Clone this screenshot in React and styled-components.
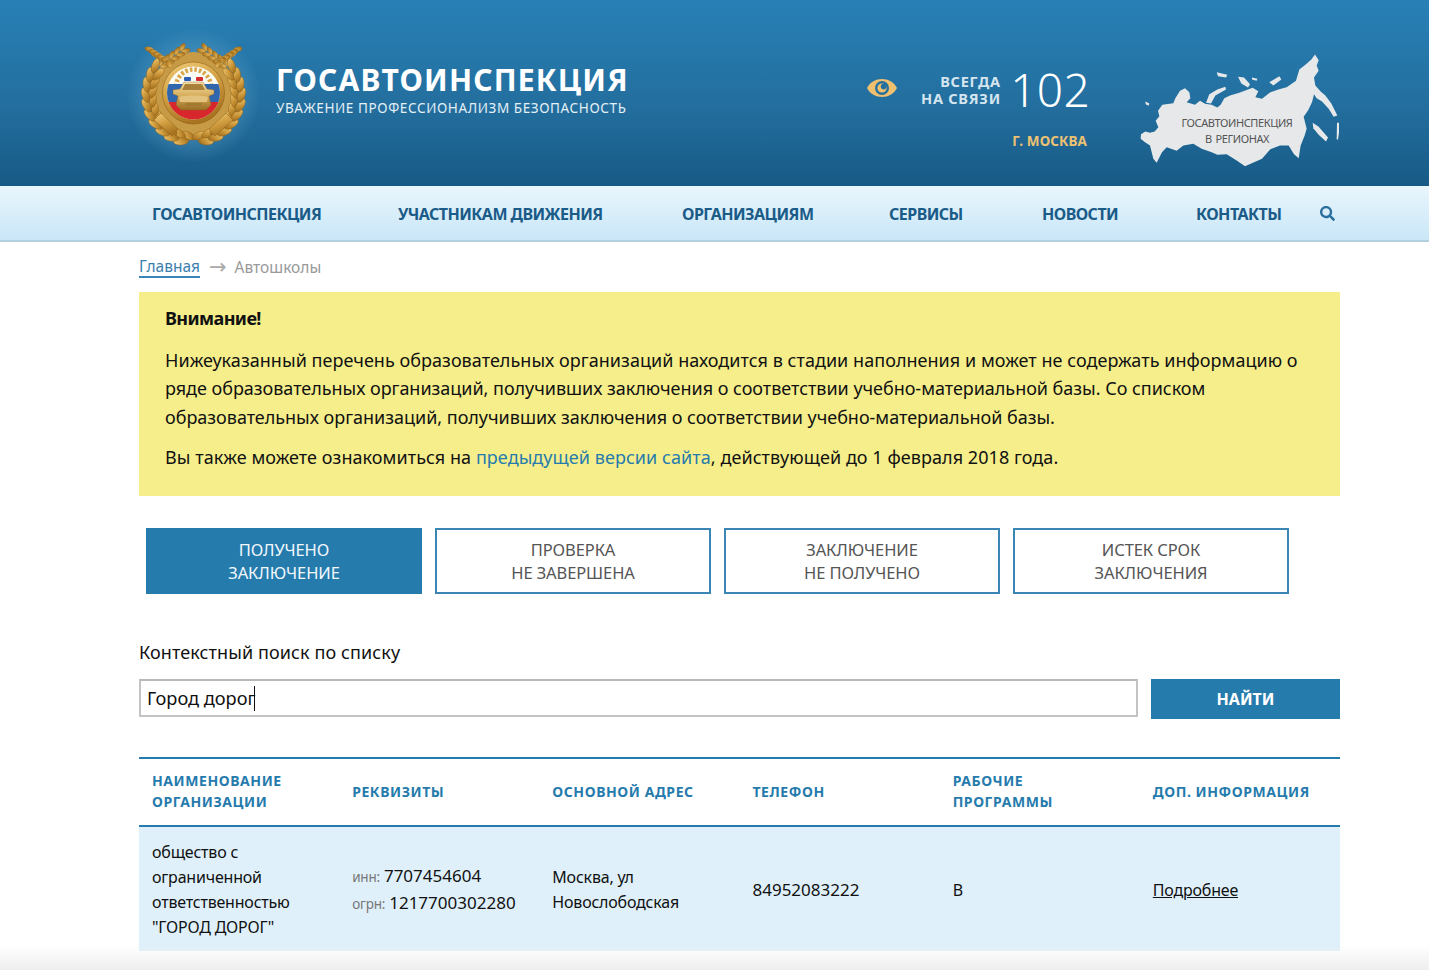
import React from 'react';
import styled, { createGlobalStyle } from 'styled-components';
import { FaSearch } from 'react-icons/fa';

const FONT = '"Noto Sans", "Open Sans", sans-serif';
const BLUE = '#267bad';

const GlobalStyle = createGlobalStyle`
  html, body {
    margin: 0;
    padding: 0;
    background: #fff;
    font-family: ${FONT};
    color: #111;
  }
`;

const Page = styled.div`
  position: relative;
  height: 970px;
  overflow: hidden;
`;

const Header = styled.header`
  height: 186px;
  background: linear-gradient(180deg, #2880b6 0%, #236f9f 55%, #185a86 100%);
`;

const HeaderInner = styled.div`
  width: 1201px;
  margin-left: 139px;
  display: flex;
  align-items: flex-start;
`;

const EmblemSvg = styled.svg`
  width: 112px;
  height: 120px;
  margin-top: 35px;
  overflow: visible;
  filter: blur(0.3px);
`;

const Brand = styled.div`
  margin: 61px 0 0 25px;
  color: #fff;
`;

const BrandTitle = styled.div`
  font-size: 30px;
  line-height: 38px;
  font-weight: 700;
  letter-spacing: 1.2px;
  white-space: nowrap;
`;

const BrandTag = styled.div`
  font-size: 13.5px;
  line-height: 18px;
  letter-spacing: 0.6px;
  color: #e4f0f7;
  white-space: nowrap;
`;

const HeaderRight = styled.div`
  margin-left: auto;
  display: flex;
  align-items: flex-start;
`;

const EyeSvg = styled.svg`
  width: 30px;
  height: 20px;
  margin-top: 78px;
`;

const Contact = styled.div`
  margin: 66px 0 0 24px;
  width: 167px;
`;

const ContactRow = styled.div`
  display: flex;
  justify-content: space-between;
  align-items: center;
`;

const Always = styled.div`
  font-size: 14.5px;
  line-height: 17px;
  font-weight: 700;
  letter-spacing: 0.75px;
  color: #d5e5ef;
  text-align: right;
  white-space: nowrap;
`;

const Phone = styled.div`
  margin: -2px -2px 0 0;
  font-size: 46px;
  line-height: 50px;
  font-weight: 300;
  letter-spacing: 0.3px;
  color: #fff;
`;

const City = styled.div`
  margin-top: 18px;
  padding-right: 1px;
  font-size: 13.5px;
  line-height: 18px;
  font-weight: 700;
  letter-spacing: 0.1px;
  color: #ecc272;
  text-align: right;
`;

const MapBox = styled.div`
  position: relative;
  width: 200px;
  height: 117px;
  margin: 52px 0 0 52px;
`;

const MapSvg = styled.svg`
  display: block;
  filter: blur(0.35px);
`;

const MapLabel = styled.div`
  position: absolute;
  left: 0;
  right: 6px;
  top: 63px;
  font-size: 11px;
  line-height: 16px;
  letter-spacing: -0.4px;
  word-spacing: 1.5px;
  color: #555;
  text-align: center;
`;

const Nav = styled.nav`
  height: 54px;
  background: linear-gradient(180deg, #e9f5fc 0%, #c9e7f8 100%);
  border-bottom: 2px solid #b4cfe0;
`;

const NavList = styled.div`
  margin-left: 152px;
  height: 54px;
  padding-top: 1px;
  box-sizing: border-box;
  display: grid;
  grid-template-columns: 246px 284px 207px 153px 154px 124px auto;
  align-items: center;
`;

const NavLink = styled.a`
  font-size: 16px;
  font-weight: 700;
  letter-spacing: -0.54px;
  color: #1a5b88;
  white-space: nowrap;
`;

const SearchIcon = styled(FaSearch)`
  display: block;
  width: 15px;
  height: 15px;
  color: #2b6f9f;
`;

const Main = styled.main`
  width: 1201px;
  margin-left: 139px;
`;

const Crumbs = styled.div`
  height: 50px;
  display: flex;
  align-items: center;
  font-size: 15.5px;
  color: #999;
`;

const CrumbLink = styled.a`
  color: #3a7eae;
  line-height: 20px;
  border-bottom: 2px solid #3a86b8;
`;

const CrumbArrow = styled.span`
  margin: 0 8px 0 9px;
  color: #aaa;
  font-family: "DejaVu Sans", sans-serif;
  font-size: 21px;
  line-height: 20px;
`;

const Notice = styled.section`
  height: 204px;
  box-sizing: border-box;
  padding: 12px 26px 0;
  background: #f5ee8b;
  font-size: 18px;
  line-height: 28.5px;
  color: #111;
`;

const NoticeTitle = styled.div`
  font-weight: 700;
  letter-spacing: -0.6px;
  margin-bottom: 13px;
`;

const NoticeText = styled.p`
  margin: 0 0 12px;
  white-space: nowrap;
`;

const NoticeLine = styled.span`
  display: block;
  letter-spacing: ${p => p.$spacing}px;
`;

const NoticeLink = styled.a`
  color: #267bad;
`;

const Tabs = styled.div`
  display: flex;
  gap: 13px;
  margin: 32px 0 0 7px;
`;

const Tab = styled.button`
  width: 276px;
  height: 66px;
  padding: 0;
  box-sizing: border-box;
  border: 2px solid ${p => (p.$active ? BLUE : '#3c86b6')};
  background: ${p => (p.$active ? BLUE : '#fff')};
  color: ${p => (p.$active ? '#f2f8fc' : '#555')};
  font-family: ${FONT};
  font-size: 16.5px;
  line-height: 23px;
  letter-spacing: -0.1px;
  text-align: center;
`;

const SearchLabel = styled.div`
  margin-top: 44px;
  font-size: 18px;
  line-height: 28px;
  letter-spacing: 0.1px;
`;

const SearchRow = styled.div`
  display: flex;
  justify-content: space-between;
  align-items: flex-start;
  margin-top: 13px;
`;

const SearchField = styled.div`
  width: 999px;
  height: 38px;
  box-sizing: border-box;
  padding: 0 0 1px 6px;
  border: 2px solid #c4c4c4;
  border-top-color: #b8b8b8;
  display: flex;
  align-items: center;
  font-size: 18.2px;
  color: #111;

  &::after {
    content: '';
    width: 1px;
    height: 25px;
    margin: 1px 0 0 -1px;
    background: #111;
  }
`;

const FindButton = styled.button`
  width: 189px;
  height: 40px;
  padding: 0;
  border: 0;
  background: ${BLUE};
  color: #fff;
  font-family: ${FONT};
  font-size: 16px;
  font-weight: 700;
`;

const Table = styled.table`
  width: 100%;
  margin-top: 38px;
  border-collapse: collapse;
  table-layout: fixed;
`;

const Th = styled.th`
  height: 68px;
  padding: 0 0 2px 13px;
  border-top: 2px solid ${BLUE};
  border-bottom: 2px solid ${BLUE};
  box-sizing: border-box;
  font-size: 14px;
  line-height: 21px;
  font-weight: 700;
  letter-spacing: 0.57px;
  color: ${BLUE};
  text-align: left;
  white-space: nowrap;
`;

const Row = styled.tr`
  background: #dff0fa;
`;

const Td = styled.td`
  height: 125px;
  padding: 2px 0 0 13px;
  box-sizing: border-box;
  font-size: 16px;
  line-height: 25px;
  letter-spacing: -0.2px;
  color: #111;
  white-space: nowrap;
`;

const Digits = styled.span`
  font-size: 17px;
  letter-spacing: 0;
`;

const Req = styled.span`
  font-size: 13.5px;
  color: #777;
`;

const MoreLink = styled.a`
  color: #111;
  text-decoration: underline;
`;

const BottomFade = styled.div`
  position: absolute;
  left: 0;
  right: 0;
  bottom: 0;
  height: 25px;
  background: linear-gradient(180deg, rgba(238, 238, 238, 0) 0%, #eeeeee 100%);
  pointer-events: none;
`;

// two rows of laurel leaves running up both sides of the badge
const wreathLeaves = [];
[-1, 1].forEach(side => {
  [
    { radius: 41, tilt: -14, offset: 0 },
    { radius: 48, tilt: 20, offset: 7 },
  ].forEach(({ radius, tilt, offset }) => {
    for (let i = 0; i < 10; i += 1) {
      const deg = 172 - i * 12.5 - offset;
      const rad = (deg * Math.PI) / 180;
      wreathLeaves.push({
        x: 63.5 + side * radius * Math.sin(rad),
        y: 60 - radius * Math.cos(rad),
        angle: side * (deg - 90 + tilt),
      });
    }
  });
});

// wheat ears on top of the wreath, [from, to] in the left half
const earLines = [
  [[54, 14], [33, 29]],
  [[21, 16], [37, 27]],
];
const wheat = [];
[-1, 1].forEach(side => {
  earLines.forEach(([[x1, y1], [x2, y2]]) => {
    const base = (Math.atan2(x2 - x1, y1 - y2) * 180) / Math.PI;
    for (let i = 0; i < 5; i += 1) {
      const x = x1 + ((x2 - x1) * i) / 4;
      const y = y1 + ((y2 - y1) * i) / 4;
      [-1.8, 1.8].forEach(shift => {
        const gx = x + shift;
        wheat.push({
          x: side === 1 ? 127 - gx : gx,
          y: y + shift,
          angle: side * -(base + shift * 12),
        });
      });
    }
  });
});

const Emblem = () => (
  <EmblemSvg viewBox="9 0 112 120" role="img" aria-label="Эмблема Госавтоинспекции">
    <defs>
      <radialGradient id="halo">
        <stop offset="0.6" stopColor="#6fb3d8" stopOpacity="0.35" />
        <stop offset="1" stopColor="#6fb3d8" stopOpacity="0" />
      </radialGradient>
      <linearGradient id="gold" x1="0" y1="0" x2="0.4" y2="1">
        <stop offset="0" stopColor="#f1cd79" />
        <stop offset="0.55" stopColor="#d09c3f" />
        <stop offset="1" stopColor="#a8741f" />
      </linearGradient>
      <linearGradient id="carGold" x1="0" y1="0" x2="0" y2="1">
        <stop offset="0" stopColor="#f5e2ac" />
        <stop offset="0.5" stopColor="#d6aa58" />
        <stop offset="1" stopColor="#9a6e24" />
      </linearGradient>
      <clipPath id="disc">
        <circle cx="63.5" cy="58" r="26.5" />
      </clipPath>
    </defs>
    <circle cx="63.5" cy="60" r="68" fill="url(#halo)" />
    <circle cx="63.5" cy="61" r="44" fill="#c79a45" />
    {wheat.map((grain, i) => (
      <ellipse
        key={`w${i}`}
        cx={grain.x}
        cy={grain.y}
        rx="2.2"
        ry="4.4"
        fill="url(#gold)"
        stroke="#8d6019"
        strokeWidth="0.4"
        transform={`rotate(${grain.angle} ${grain.x} ${grain.y})`}
      />
    ))}
    {wreathLeaves.map((leaf, i) => (
      <ellipse
        key={i}
        cx={leaf.x}
        cy={leaf.y}
        rx="3.6"
        ry="7.6"
        fill="url(#gold)"
        stroke="#8d6019"
        strokeWidth="0.45"
        transform={`rotate(${leaf.angle} ${leaf.x} ${leaf.y})`}
      />
    ))}
    <g fill="url(#gold)" stroke="#8d6019" strokeWidth="0.5">
      <path d="M31 78 L48 94 L42 101 L24 85Z" />
      <path d="M96 78 L79 94 L85 101 L103 85Z" />
    </g>
    <circle cx="63.5" cy="58" r="31" fill="url(#gold)" stroke="#8d6019" strokeWidth="0.6" />
    <circle cx="63.5" cy="58" r="26.5" fill="#fbfbf5" />
    <g clipPath="url(#disc)">
      <circle cx="63.5" cy="52" r="17.5" fill="none" stroke="#d9a648" strokeWidth="4.5" strokeDasharray="2.6 2" />
      <rect x="36" y="49" width="56" height="18" fill="#2f66ad" />
      <rect x="36" y="67" width="56" height="18" fill="#d8262d" />
    </g>
    <rect x="54" y="42" width="7" height="4" rx="1" fill="#2f5fb0" />
    <rect x="66" y="42" width="7" height="4" rx="1" fill="#d42a30" />
    <path
      d="M54 47 L73 47 L77 54 L84 55 L84 59 L79 61 L81 70 L76 75 L51 75 L46 70 L48 61 L43 59 L43 55 L50 54Z"
      fill="url(#carGold)"
      stroke="#8a6320"
      strokeWidth="0.4"
    />
    <path d="M55 49 L72 49 L75 55 L52 55Z" fill="#a8803a" />
    <path d="M49 62 C55 60 72 60 78 62 L77 67 L50 67Z" fill="#e3c27e" />
    <rect x="55" y="68" width="17" height="3" rx="1" fill="#a47a30" />
  </EmblemSvg>
);

const Eye = () => (
  <EyeSvg viewBox="0 0 30 20" aria-hidden="true">
    <path d="M0 10 C6 -2 24 -2 30 10 C24 22 6 22 0 10Z" fill="#efc070" />
    <circle cx="15" cy="10" r="7" fill="#236f9f" />
    <circle cx="15" cy="10" r="4.6" fill="#efc070" />
    <circle cx="16.6" cy="8.6" r="2.8" fill="#236f9f" />
  </EyeSvg>
);

const RussiaMap = () => (
  <MapSvg viewBox="30 20 600 350" width="200" height="117" aria-hidden="true">
    <g fill="#e6e8ea">
      <path d="M33 266 L46 258 L60 262 L74 258 L85 245 L77 226 L88 212 L84 196 L97 178 L130 173 L136 158 L150 136 L165 128 L178 140 L181 158 L170 170 L195 178 L210 166 L225 175 L245 178 L262 186 L272 178 L283 158 L300 150 L330 141 L368 127 L385 137 L376 155 L396 160 L420 141 L445 132 L470 125 L498 106 L508 72 L528 56 L544 42 L555 27 L566 44 L560 60 L566 76 L552 96 L556 120 L572 138 L586 150 L604 174 L622 210 L611 214 L596 190 L576 168 L560 158 L552 146 L546 170 L534 195 L521 214 L530 250 L524 270 L512 300 L506 338 L492 326 L476 300 L450 300 L421 311 L396 340 L345 362 L320 345 L290 326 L262 328 L245 320 L215 310 L190 295 L160 300 L140 316 L110 305 L96 320 L80 352 L70 340 L60 300 L45 290 L32 280Z" />
      <path d="M228 172 L238 146 L262 132 L286 124 L288 132 L256 150 L243 174Z" />
      <path d="M324 94 L342 96 L360 116 L354 126 L334 114Z" />
      <path d="M418 110 L448 92 L454 102 L430 120Z" />
      <path d="M260 80 L292 88 L288 96 L264 92Z" />
      <path d="M548 232 L566 244 L594 276 L588 288 L566 268 L550 248Z" />
      <path d="M46 168 L58 174 L56 181 L47 176Z" />
      <path d="M621 232 L627 232 L627 262 L624 282 L620 282Z" />
      <path d="M366 96 L382 100 L380 106 L366 102Z" />
    </g>
  </MapSvg>
);

const navItems = ['ГОСАВТОИНСПЕКЦИЯ', 'УЧАСТНИКАМ ДВИЖЕНИЯ', 'ОРГАНИЗАЦИЯМ', 'СЕРВИСЫ', 'НОВОСТИ', 'КОНТАКТЫ'];

const tabs = [
  { first: 'ПОЛУЧЕНО', second: 'ЗАКЛЮЧЕНИЕ', active: true },
  { first: 'ПРОВЕРКА', second: 'НЕ ЗАВЕРШЕНА' },
  { first: 'ЗАКЛЮЧЕНИЕ', second: 'НЕ ПОЛУЧЕНО' },
  { first: 'ИСТЕК СРОК', second: 'ЗАКЛЮЧЕНИЯ' },
];

const App = () => (
  <Page>
    <GlobalStyle />
    <Header>
      <HeaderInner>
        <Emblem />
        <Brand>
          <BrandTitle>ГОСАВТОИНСПЕКЦИЯ</BrandTitle>
          <BrandTag>УВАЖЕНИЕ ПРОФЕССИОНАЛИЗМ БЕЗОПАСНОСТЬ</BrandTag>
        </Brand>
        <HeaderRight>
          <Eye />
          <Contact>
            <ContactRow>
              <Always>
                ВСЕГДА
                <br />
                НА СВЯЗИ
              </Always>
              <Phone>102</Phone>
            </ContactRow>
            <City>Г. МОСКВА</City>
          </Contact>
          <MapBox>
            <RussiaMap />
            <MapLabel>
              ГОСАВТОИНСПЕКЦИЯ
              <br />
              В РЕГИОНАХ
            </MapLabel>
          </MapBox>
        </HeaderRight>
      </HeaderInner>
    </Header>
    <Nav>
      <NavList>
        {navItems.map(item => (
          <NavLink key={item}>{item}</NavLink>
        ))}
        <SearchIcon />
      </NavList>
    </Nav>
    <Main>
      <Crumbs>
        <CrumbLink>Главная</CrumbLink>
        <CrumbArrow>→</CrumbArrow>
        Автошколы
      </Crumbs>
      <Notice>
        <NoticeTitle>Внимание!</NoticeTitle>
        <NoticeText>
          <NoticeLine $spacing={0.04}>
            Нижеуказанный перечень образовательных организаций находится в стадии наполнения и может не содержать информацию о
          </NoticeLine>
          <NoticeLine $spacing={-0.03}>
            ряде образовательных организаций, получивших заключения о соответствии учебно-материальной базы. Со списком
          </NoticeLine>
          <NoticeLine $spacing={-0.02}>
            образовательных организаций, получивших заключения о соответствии учебно-материальной базы.
          </NoticeLine>
        </NoticeText>
        <NoticeText>
          <NoticeLine $spacing={0.06}>
            Вы также можете ознакомиться на <NoticeLink>предыдущей версии сайта</NoticeLink>, действующей до 1 февраля 2018 года.
          </NoticeLine>
        </NoticeText>
      </Notice>
      <Tabs>
        {tabs.map(tab => (
          <Tab key={tab.first} $active={tab.active}>
            {tab.first}
            <br />
            {tab.second}
          </Tab>
        ))}
      </Tabs>
      <SearchLabel>Контекстный поиск по списку</SearchLabel>
      <SearchRow>
        <SearchField>Город дорог</SearchField>
        <FindButton>НАЙТИ</FindButton>
      </SearchRow>
      <Table>
        <thead>
          <tr>
            <Th>
              НАИМЕНОВАНИЕ
              <br />
              ОРГАНИЗАЦИИ
            </Th>
            <Th>РЕКВИЗИТЫ</Th>
            <Th>ОСНОВНОЙ АДРЕС</Th>
            <Th>ТЕЛЕФОН</Th>
            <Th>
              РАБОЧИЕ
              <br />
              ПРОГРАММЫ
            </Th>
            <Th>ДОП. ИНФОРМАЦИЯ</Th>
          </tr>
        </thead>
        <tbody>
          <Row>
            <Td>
              общество с
              <br />
              ограниченной
              <br />
              ответственностью
              <br />
              "ГОРОД ДОРОГ"
            </Td>
            <Td>
              <Req>инн:</Req> <Digits>7707454604</Digits>
              <br />
              <Req>огрн:</Req> <Digits>1217700302280</Digits>
            </Td>
            <Td>
              Москва, ул
              <br />
              Новослободская
            </Td>
            <Td>
              <Digits>84952083222</Digits>
            </Td>
            <Td>В</Td>
            <Td>
              <MoreLink>Подробнее</MoreLink>
            </Td>
          </Row>
        </tbody>
      </Table>
    </Main>
    <BottomFade />
  </Page>
);

export default App;
